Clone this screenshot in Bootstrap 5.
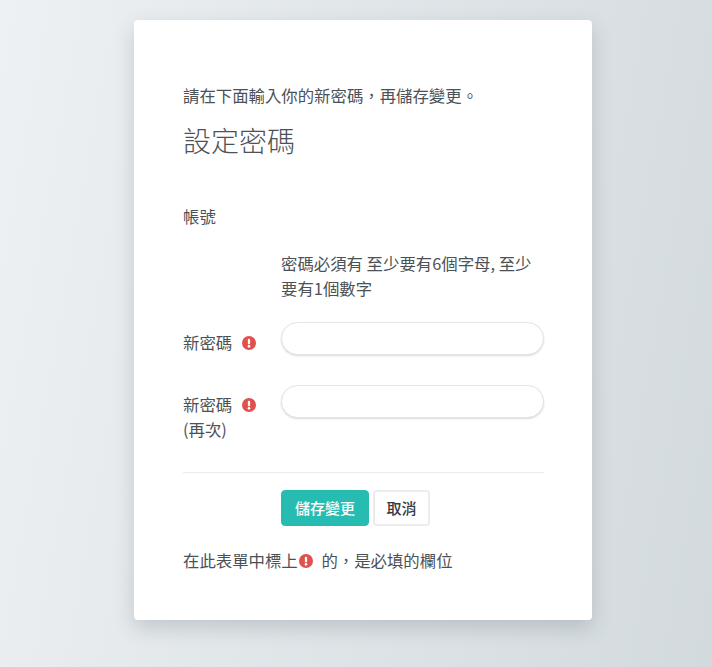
<!DOCTYPE html>
<html lang="zh-Hant">
<head>
  <meta charset="UTF-8">
  <title>設定密碼</title>
  <meta name="viewport" content="width=device-width, initial-scale=1">
  <link href="https://cdn.jsdelivr.net/npm/bootstrap@5.3.0/dist/css/bootstrap.min.css" rel="stylesheet">
  <style>
    html, body { height: 100%; }
    body {
      background: linear-gradient(100deg, #eef1f4 0%, #e2e7ea 40%, #d3dade 100%);
      color: #4c5156;
      font-family: "Noto Sans CJK TC", "Noto Sans", sans-serif;
      font-size: 16.4px;
      line-height: 25px;
      overflow: hidden;
    }
    .pw-card {
      width: 458px;
      height: 600px;
      margin: 20px 0 0 134px;
      padding: 63px 48px 0 49px;
      background: #fff;
      border-radius: 4px;
      box-shadow: 0 8px 20px rgba(70, 80, 90, .22);
    }
    .pw-title { font-size: 28px; line-height: 38px; font-weight: 300; margin: 13px 0 0; color: #4d5257; }
    .pw-account { margin-top: 45px; }
    .pw-label { width: 98px; flex-shrink: 0; }
    .pw-field { flex-grow: 1; }
    .pw-hint { margin: 22px 0 0 98px; }
    .pw-row-first { margin-top: 21px; }
    .pw-row-second { margin-top: 30px; }
    .pw-input.form-control {
      height: 33px;
      border: 1px solid #e4e6e8;
      border-radius: 17px;
      box-shadow: 0 1px 2px rgba(0, 0, 0, .14);
    }
    .pw-label-text { padding-top: 8px; }
    .pw-second-label { padding-top: 7px; }
    .pw-alert { width: 14px; height: 14px; vertical-align: -1px; margin-left: 6px; }
    .pw-alert-tail { margin-left: 1px; margin-right: 5px; }
    .pw-rule { margin: 30px 0 0; border-color: #e9ecee; opacity: 1; }
    .pw-actions { margin: 17px 0 0 98px; gap: 4px; }
    .pw-save.btn, .pw-cancel.btn {
      height: 36px;
      padding: 0;
      font-size: 15px;
      font-weight: 500;
      line-height: 34px;
      border-radius: 4px;
    }
    .pw-save.btn { width: 88px; background: #27bcb2; border: 1px solid #27bcb2; color: #fff; }
    .pw-cancel.btn { width: 57px; background: #fff; border: 2px solid #eaecee; color: #343a40; line-height: 32px; }
    .pw-note { margin-top: 22px; }
  </style>
</head>
<body>

<div class="pw-card">
  <div>請在下面輸入你的新密碼&#xFF0C;再儲存變更。</div>
  <h1 class="pw-title">設定密碼</h1>

  <form>
    <div class="pw-account">帳號</div>
    <div class="pw-hint">密碼必須有 至少要有6個字母, 至少要有1個數字</div>

    <div class="d-flex pw-row-first">
      <label class="pw-label pw-label-text">新密碼
        <svg class="pw-alert" viewBox="0 0 16 16"><circle cx="8" cy="8" r="8" fill="#e0504c"/><rect x="6.7" y="3" width="2.6" height="6.6" rx="1.2" fill="#fff"/><circle cx="8" cy="11.8" r="1.5" fill="#fff"/></svg>
      </label>
      <div class="pw-field"><input type="password" class="form-control pw-input"></div>
    </div>

    <div class="d-flex pw-row-second">
      <label class="pw-label pw-second-label">新密碼
        <svg class="pw-alert" viewBox="0 0 16 16"><circle cx="8" cy="8" r="8" fill="#e0504c"/><rect x="6.7" y="3" width="2.6" height="6.6" rx="1.2" fill="#fff"/><circle cx="8" cy="11.8" r="1.5" fill="#fff"/></svg>
        <br>(再次)
      </label>
      <div class="pw-field"><input type="password" class="form-control pw-input"></div>
    </div>

    <hr class="pw-rule">

    <div class="d-flex pw-actions">
      <button type="button" class="btn pw-save">儲存變更</button>
      <button type="button" class="btn pw-cancel">取消</button>
    </div>
  </form>

  <div class="pw-note">在此表單中標上<svg class="pw-alert pw-alert-tail" viewBox="0 0 16 16"><circle cx="8" cy="8" r="8" fill="#e0504c"/><rect x="6.7" y="3" width="2.6" height="6.6" rx="1.2" fill="#fff"/><circle cx="8" cy="11.8" r="1.5" fill="#fff"/></svg> 的&#xFF0C;是必填的欄位</div>
</div>

</body>
</html>
